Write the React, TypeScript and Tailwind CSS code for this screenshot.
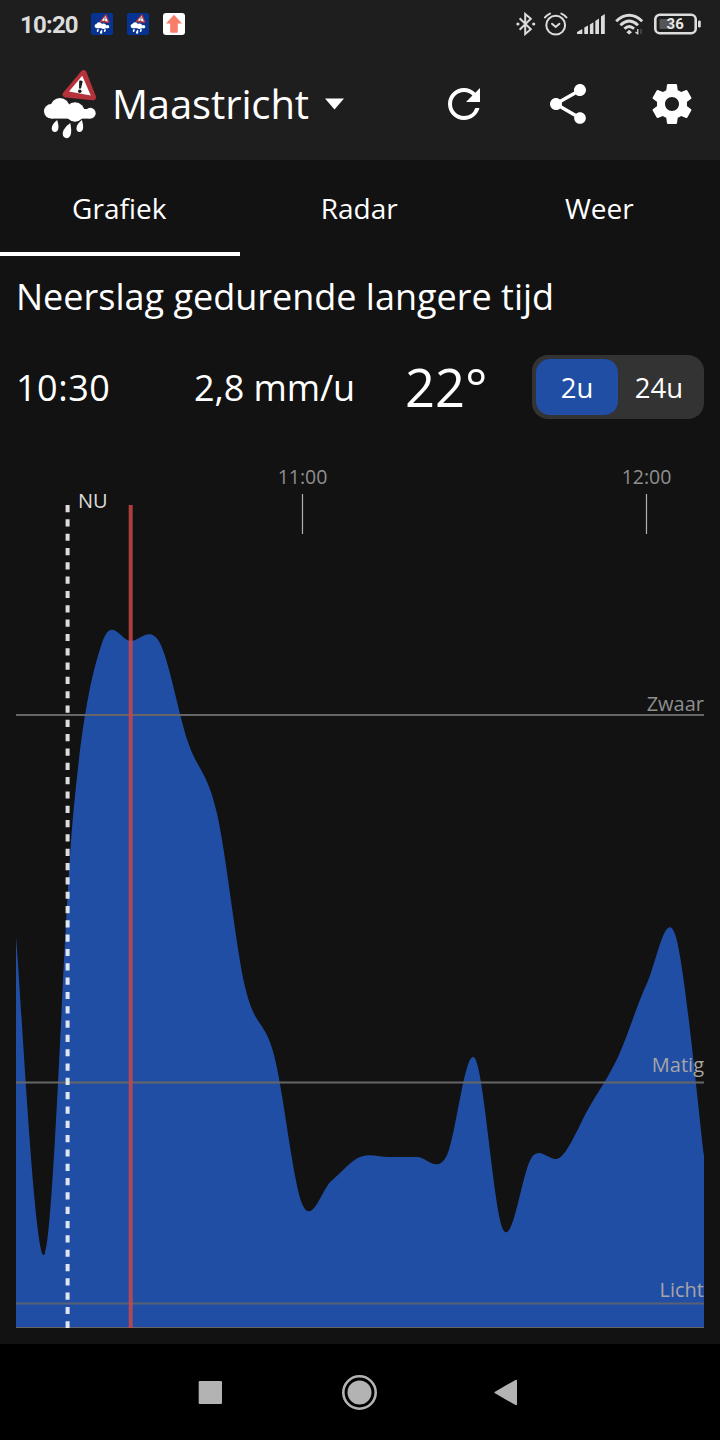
import React from "react";
import { MdRefresh, MdShare } from "react-icons/md";

const rain = [
  937, 1254, 813, 643, 641, 642, 742, 812, 988, 1055, 1205, 1181, 1157, 1157, 1157, 1157, 1058,
  1230, 1157, 1157, 1107, 1057, 984, 935, 1156,
];

const CHART_TOP = 440;
const BASELINE = 1328;
const LEFT = 16;
const STEP = 688 / 24;
const INTENSITY = 1 / 6;

function areaPath(values: number[]): string {
  const pts = values.map((y, i) => ({ x: LEFT + i * STEP, y }));
  const at = (i: number) => pts[Math.max(0, Math.min(pts.length - 1, i))];
  let d = `M${LEFT} ${BASELINE}L${pts[0].x} ${pts[0].y}`;
  for (let i = 1; i < pts.length; i++) {
    const before = at(i - 2);
    const prev = at(i - 1);
    const cur = at(i);
    const next = at(i + 1);
    const c1x = prev.x + (cur.x - before.x) * INTENSITY;
    const c1y = prev.y + (cur.y - before.y) * INTENSITY;
    const c2x = cur.x - (next.x - prev.x) * INTENSITY;
    const c2y = cur.y - (next.y - prev.y) * INTENSITY;
    d += `C${c1x} ${c1y} ${c2x} ${c2y} ${cur.x} ${cur.y}`;
  }
  return `${d}L704 ${BASELINE}Z`;
}

function RainLogo({ className }: { className: string }) {
  return (
    <svg viewBox="0 0 52 70" className={className}>
      <path d="M39.6 4L21.6 25.5L49 28.2Z" fill="#b5323a" stroke="#b5323a" strokeWidth="6" strokeLinejoin="round" />
      <path d="M38.2 6.8L25 22.5L46.8 26.4Z" fill="#fff" />
      <path d="M35.2 11.8Q37.2 10.8 38.7 12.4L37 19.6L35 19.4Z" fill="#1e1e1e" />
      <circle cx="35.8" cy="22.2" r="1.8" fill="#1e1e1e" />
      <g fill="#fff">
        <circle cx="7.2" cy="42.3" r="7.2" />
        <circle cx="16" cy="38.4" r="9.5" />
        <circle cx="31" cy="43" r="9.7" />
        <circle cx="46.3" cy="44.2" r="5.4" />
        <rect x="7" y="40" width="39.3" height="9.6" />
        <path d="M13.2 51C14.4 55 14.6 57 14.4 59C14 64.4 7.8 64 7.7 59.4C7.7 56 10.5 53.2 13.2 51Z" />
        <path d="M26.2 54C27.2 58.5 27.4 61.5 27 64.5C26 71 18.8 70.4 18.7 64.8C18.7 60.5 22.5 57 26.2 54Z" />
        <path d="M37.9 51C39.1 55 39.3 57 39.1 59C38.7 64.4 32.5 64 32.4 59.4C32.4 56 35.2 53.2 37.9 51Z" />
      </g>
    </svg>
  );
}

function SettingsIcon() {
  return (
    <svg viewBox="0 0 24 24" className="size-12" fill="#fff">
      <path d="M19.43 12.98c.04-.32.07-.64.07-.98s-.03-.66-.07-.98l2.11-1.65c.19-.15.24-.42.12-.64l-2-3.46c-.12-.22-.39-.3-.61-.22l-2.49 1c-.52-.4-1.08-.73-1.69-.98l-.38-2.65C14.46 2.18 14.25 2 14 2h-4c-.25 0-.46.18-.49.42l-.38 2.65c-.61.25-1.17.59-1.69.98l-2.49-1c-.23-.09-.49 0-.61.22l-2 3.46c-.13.22-.07.49.12.64l2.11 1.65c-.04.32-.07.65-.07.98s.03.66.07.98l-2.11 1.65c-.19.15-.24.42-.12.64l2 3.46c.12.22.39.3.61.22l2.49-1c.52.4 1.08.73 1.69.98l.38 2.65c.03.24.24.42.49.42h4c.25 0 .46-.18.49-.42l.38-2.65c.61-.25 1.17-.59 1.69-.98l2.49 1c.23.09.49 0 .61-.22l2-3.46c.12-.22.07-.49-.12-.64l-2.11-1.65zM12 15.5c-1.93 0-3.5-1.57-3.5-3.5s1.57-3.5 3.5-3.5 3.5 1.57 3.5 3.5-1.57 3.5-3.5 3.5z" />
    </svg>
  );
}

function StatusBar() {
  return (
    <div className="flex h-12 items-center pl-5 pr-[19px] text-[#dcdcdc]">
      <span className="w-[71px] pt-[2px] font-['Roboto',sans-serif] text-[24px] leading-6 font-bold tracking-[-0.8px]">10:20</span>
      <div className="flex gap-3.5">
        <div className="flex size-[22px] items-center justify-center rounded-[2px] bg-[#063391]">
          <RainLogo className="h-[20px] w-[16px]" />
        </div>
        <div className="flex size-[22px] items-center justify-center rounded-[2px] bg-[#063391]">
          <RainLogo className="h-[20px] w-[16px]" />
        </div>
        <svg viewBox="0 0 22 22" className="size-[22px]">
          <rect width="22" height="22" rx="3" fill="#fff" />
          <path d="M11 1.8L19 10.6H14.8V18.7Q14.8 19.7 13.8 19.7H8.2Q7.2 19.7 7.2 18.7V10.6H3Z" fill="#fa7c6b" />
        </svg>
      </div>
      <div className="ml-auto flex items-center">
        <svg viewBox="0 0 20 24" className="mr-[8px] h-6 w-5" fill="none" stroke="currentColor" strokeWidth="2">
          <path d="M3.6 6.3L14.8 17.2L9.2 22V2L14.8 6.8L3.6 17.7" />
          <circle cx="1.9" cy="12" r="1.6" fill="currentColor" stroke="none" />
          <circle cx="17.7" cy="12" r="1.6" fill="currentColor" stroke="none" />
        </svg>
        <svg viewBox="0 0 24 24" className="mr-[9px] size-6" fill="none" stroke="currentColor" strokeWidth="2" strokeLinecap="round">
          <circle cx="11.7" cy="13.2" r="9.4" />
          <path d="M8 11.8L11.7 15L15.4 11.8M1 5.4Q3 2.8 6 1.6M22.4 5.4Q20.4 2.8 17.4 1.6" />
        </svg>
        <svg viewBox="0 0 28 20" className="mr-[10px] h-5 w-7" fill="currentColor">
          <path d="M0 20V18L5.3 15V20ZM7.3 20V13.6L11 11.4V20ZM12.9 20V10.4L16.4 8.2V20ZM18.3 20V7L22 4.4V20ZM24 20V2.6L27.8 0V20Z" />
        </svg>
        <svg viewBox="0 0 29 22" className="mr-[10px] h-[22px] w-[29px]" fill="none" stroke="currentColor" strokeWidth="2.9">
          <path d="M1.2 8.2Q14.2-3.6 27.2 8.2M5.4 12.2Q14.2 4 23 12.2M9.4 15.8Q14.2 11.2 19 15.8" />
          <path d="M14.2 16.8L17 19.2L14.2 21.4L11.4 19.2Z" fill="currentColor" stroke="none" />
          <path d="M22.8 16V21.4M22.8 21L20.5 19" strokeWidth="1.3" />
          <path d="M26 21V16" stroke="#555" strokeWidth="1.3" />
        </svg>
        <svg viewBox="0 0 47 22" className="h-[22px] w-[47px]">
          <rect x="1.3" y="1.8" width="40.4" height="18.4" rx="4.5" fill="none" stroke="currentColor" strokeWidth="2.6" />
          <rect x="5.5" y="6" width="12.5" height="10" rx="1" fill="#555" />
          <rect x="44" y="7.5" width="2.8" height="7" rx="1.2" fill="currentColor" />
          <text x="21.2" y="16.2" textAnchor="middle" fill="#e8e8e8" className="font-['Roboto',sans-serif] text-[15px] font-bold">36</text>
        </svg>
      </div>
    </div>
  );
}

function AppBar() {
  return (
    <div className="flex h-28 items-center pr-6 pl-11">
      <RainLogo className="h-[70px] w-[52px]" />
      <span className="ml-[16px] text-[40px] leading-[56px] tracking-[-0.12px]">Maastricht</span>
      <svg viewBox="0 0 19 12" className="ml-4 h-3 w-[19px]">
        <path d="M0 .5H19L9.5 11.5Z" fill="#fff" />
      </svg>
      <div className="ml-auto flex gap-14 pb-[1px]">
        <MdRefresh className="size-12" />
        <MdShare className="size-12" />
        <SettingsIcon />
      </div>
    </div>
  );
}

function Chart() {
  return (
    <svg viewBox={`0 ${CHART_TOP} 720 904`} className="block h-[904px] w-[720px] font-['Open_Sans',sans-serif] text-[20px]">
      <g fill="#8f8f8f" textAnchor="middle" className="text-[19.5px]">
        <text x="302.5" y="484">11:00</text>
        <text x="646.5" y="484">12:00</text>
      </g>
      <path d="M302.5 494V534M646.5 494V534" stroke="#b0b0b0" strokeWidth="1.2" />
      <path d={areaPath(rain)} fill="#214ea5" />
      <g stroke="#666" strokeWidth="2">
        <path d="M16 715H704" />
        <path d="M16 1082.5H704" />
        <path d="M16 1303.5H704" strokeOpacity=".8" />
        <path d="M16 1327.5H704" strokeWidth="1" />
      </g>
      <g fill="#a5a5a5" textAnchor="end">
        <text x="704" y="711" fill="#8f8f8f">Zwaar</text>
        <text x="704" y="1072">Matig</text>
        <text x="704" y="1297">Licht</text>
      </g>
      <path d="M67.6 505V1328" stroke="#fff" strokeOpacity=".86" strokeWidth="4" strokeDasharray="7.2 7.12" />
      <text x="78" y="508" fill="#dcdcdc">NU</text>
      <path d="M130.7 505V1328" stroke="#cc4748" strokeOpacity=".84" strokeWidth="4" />
    </svg>
  );
}

export default function App() {
  return (
    <div className="flex h-[1440px] w-[720px] flex-col overflow-hidden bg-[#121212] font-['Open_Sans',sans-serif] text-white">
      <header className="h-40 bg-[#1e1e1e]">
        <StatusBar />
        <AppBar />
      </header>
      <nav className="grid h-24 grid-cols-3 text-center text-[28px] leading-[90px]">
        <div className="h-24 border-b-4 border-white pt-[3px] pr-[1.5px]">Grafiek</div>
        <div className="h-24 pt-[3px] pr-[1.5px]">Radar</div>
        <div className="h-24 pt-[3px] pr-[1.5px]">Weer</div>
      </nav>
      <main className="flex h-[1088px] flex-col">
        <h1 className="h-[99px] px-4 pt-4 text-[36px] leading-[50px]">Neerslag gedurende langere tijd</h1>
        <div className="flex h-16 items-center px-4">
          <span className="w-[178px] pt-[2px] text-[36px] tracking-[0.5px]">10:30</span>
          <span className="w-[211px] pt-[2px] text-[36px] tracking-[-0.1px]">2,8 mm/u</span>
          <span className="text-[52.5px]">22°</span>
          <div className="ml-auto flex h-16 w-[172px] rounded-2xl bg-[#333] p-1 text-[27.5px] leading-[58px]">
            <div className="h-14 w-[82px] rounded-[14px] bg-[#214ea5] text-center">2u</div>
            <div className="h-14 w-[82px] text-center">24u</div>
          </div>
        </div>
        <div className="pt-[21px]">
          <Chart />
        </div>
      </main>
      <footer className="h-24 bg-black">
        <svg viewBox="0 0 720 96" className="h-24 w-[720px]" fill="#b3b3b3">
          <rect x="198.7" y="37" width="23.3" height="23" rx="1" />
          <circle cx="359.5" cy="48.5" r="12" />
          <circle cx="359.5" cy="48.5" r="16.2" fill="none" stroke="#b3b3b3" strokeWidth="2.6" />
          <path d="M495.5 48.5L516 36.8V60.2Z" stroke="#b3b3b3" strokeWidth="2" strokeLinejoin="round" />
        </svg>
      </footer>
    </div>
  );
}
